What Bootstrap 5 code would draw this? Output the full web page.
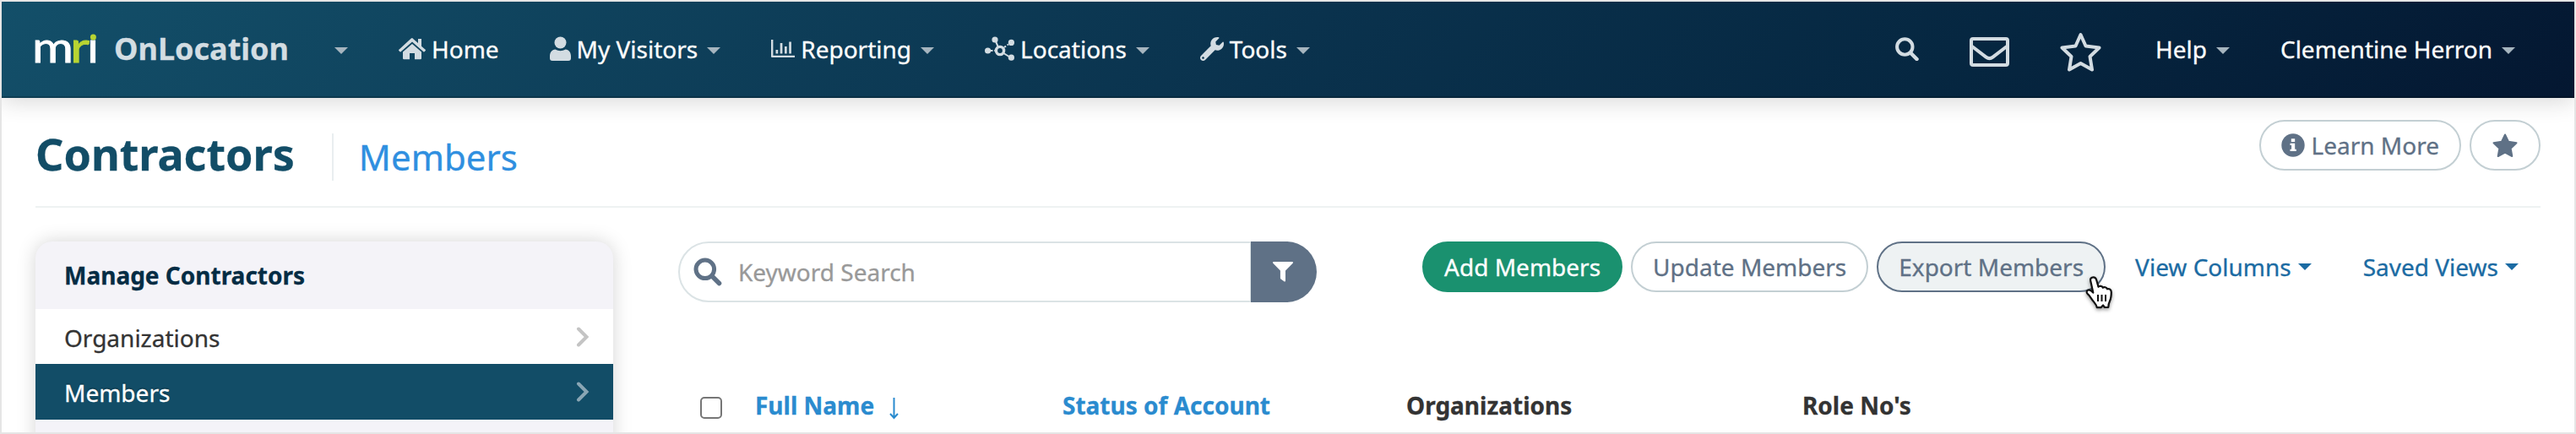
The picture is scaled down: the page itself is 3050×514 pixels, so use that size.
<!DOCTYPE html>
<html lang="en">
<head>
<meta charset="utf-8">
<title>Contractors – Members</title>
<link href="https://cdn.jsdelivr.net/npm/bootstrap@5.3.0/dist/css/bootstrap.min.css" rel="stylesheet">
<style>
html, body { height: 514px; overflow: hidden; }
body { font-family: "Noto Sans", sans-serif; font-size: 28px; line-height: 38px; color: #333; background: #fff; white-space: nowrap; -webkit-text-stroke: .3px; }
svg { display: block; flex: none; }
.frame { height: 514px; border: 2px solid #e5e5e5; overflow: hidden; }
.topnav { height: 114px; padding: 0 70px 0 40px; border-bottom: 2px solid #0003; background: linear-gradient(135deg, #134f69 0%, #0a324d 50%, #062741 75%, #041731 100%); box-shadow: 0 4px 26px rgba(0,0,0,.16); color: #fff; }
.topnav a { color: #fff; text-decoration: none; display: flex; align-items: center; gap: 7px; }
.nav-set { gap: 60px; }
.ico { fill: #d3dce2; color: #d3dce2; }
.tri { width: 0; height: 0; border: 8px solid transparent; border-top-color: #a6b5bf; border-bottom: 0; margin-left: 4px; }
.topnav .tri { margin-top: 4px; }
.wordmark { margin: 0 -6px; }
.product { font-size: 36px; font-weight: 700; color: #d3dde2; margin: 0 54px 0 21px; }
.page-head { height: 130px; margin: 0 40px; border-bottom: 2px solid #eef2f2; }
.page-head h1 { font-size: 52px; line-height: 56px; font-weight: 700; color: #124d67; margin: -4px 0 0; }
.crumb { font-size: 42px; line-height: 56px; height: 56px; border-left: 2px solid #e9eef0; margin: 0 0 0 44px; padding-left: 30px; color: #2f8fe0; }
.pill { height: 60px; border: 2px solid #c3cfd3; border-radius: 30px; padding: 0 24px; font-size: 28px; line-height: 38px; color: #5f7186; background: #fff; display: flex; align-items: center; gap: 8px; }
.pill-add { background: #1a916f; border-color: #1a916f; color: #fff; }
.pill-hot { background: #eef2f3; border-color: #5f7186; position: relative; }
.pill-link { border-color: transparent; color: #1b6ba3; background: none; margin-left: -1px; }
.pill-link .tri { border-top-color: #1b6ba3; margin: 0 0 1px 0; }
.pill-star { width: 84px; }
.pointer { position: absolute; left: 244px; top: 38px; z-index: 2; filter: drop-shadow(0 2px 2px rgba(0,0,0,.4)); }
.side { width: 684px; height: 300px; border-radius: 20px; background: #f4f3f8; box-shadow: 0 0 22px rgba(0,0,0,.17); overflow: hidden; flex: none; }
.side-title { height: 80px; padding: 0 34px; font-weight: 700; color: #042c44; display: flex; align-items: center; }
.side-item { height: 66px; padding: 1px 28px 0 34px; border: 0; border-radius: 0 !important; display: flex; align-items: center; justify-content: space-between; color: #333; background: #fff; }
.side-item.active { background: #124d67; color: #fff; text-shadow: 0 -2px 1px rgba(0,0,0,.2); }
.side-item svg { color: #c4c4c4; margin-top: -1px; }
.side-item.active svg { color: #8aa6b4; }
.finder { width: 756px; height: 72px; flex-wrap: nowrap; }
.finder-field { flex: 1; border: 2px solid #dbe3e5; border-radius: 36px 0 0 36px; display: flex; align-items: center; padding-left: 16px; background: #fff; }
.finder input { border: 0; padding: 0; margin-left: 19px; font-size: 28px; line-height: 38px; box-shadow: none !important; }
.finder input::placeholder { color: #999; opacity: 1; }
.finder-btn { width: 78px; border: 0; background: #5f7186; border-radius: 0 36px 36px 0; display: flex; align-items: center; padding: 0 0 0 26px; }
.grid-head { table-layout: fixed; margin: 94px 0 0; }
.grid-head th { padding: 0; height: 56px; vertical-align: middle; border: 0; font-weight: 700; line-height: 38px; color: #333; background: none; }
.grid-head th.sortable { color: #2a8bcf; }
.c-check { width: 91px; } .c-name { width: 364px; } .c-status { width: 407px; } .c-org { width: 469px; }
.grid-head .form-check-input { width: 26px; height: 26px; border: 2px solid #767676; border-radius: 5px; margin: 6px 0 0 26px; display: block; float: none; }
.head-left { padding-top: 42px; }
.head-right { padding-top: 26px; gap: 10px; }
.page-body { padding: 40px 40px 0; }
.page-body main { padding-left: 77px; }
.tools { gap: 10px; }
</style>
</head>
<body>
<div class="frame">
  <nav class="topnav d-flex align-items-center justify-content-between">
    <div class="d-flex align-items-center">
      <!-- mri wordmark -->
      <svg class="wordmark" width="84" height="80" viewBox="-6 -20 84 80" role="img" aria-label="mri" font-family="Lato, sans-serif" font-size="51" font-weight="400">
        <text x="-4" y="36" fill="#fff" stroke="#fff" stroke-width=".8" textLength="49" lengthAdjust="spacingAndGlyphs">m</text>
        <text x="41" y="36" fill="#b8d432" stroke="#b8d432" stroke-width=".8" textLength="23" lengthAdjust="spacingAndGlyphs">r</text>
        <text x="61" y="36" fill="#fff" stroke="#fff" stroke-width=".8" textLength="14" lengthAdjust="spacingAndGlyphs">ı</text>
        <circle cx="68.400" cy="6" r="3.500" fill="#b8d432"/>
      </svg>
      <span class="product">OnLocation</span>
      <div class="nav-set d-flex align-items-center">
        <a href="#"><i class="tri ms-0"></i></a>
        <a href="#"><svg class="ico" width="32" height="26" viewBox="0 0 32 26"><path d="M16 0 23 6V1h4v8.700l4.600 4a1 1 0 0 1 .1 1.400l-.9 1a1 1 0 0 1-1.400.1L16 4.600 2.600 16.200a1 1 0 0 1-1.400-.1l-.9-1a1 1 0 0 1 .1-1.400L14.500.7a2.300 2.300 0 0 1 3 0z"/><path d="M16 7 27 16.500V24a1.200 1.200 0 0 1-1.200 1.200H19V18h-6v7.200H6.200A1.200 1.200 0 0 1 5 24v-7.500z"/></svg>Home</a>
        <a href="#"><svg class="ico" width="25" height="30" viewBox="0 0 25 30"><circle cx="12.500" cy="7.500" r="7"/><path d="M6.500 15.500c2 1.300 4 1.700 6 1.700s4-.4 6-1.700c4 .3 6.500 3.500 6.500 8V26a3 3 0 0 1-3 3H3a3 3 0 0 1-3-3v-2.500c0-4.500 2.500-7.700 6.500-8z"/></svg>My Visitors<i class="tri"></i></a>
        <a href="#"><svg class="ico" width="28" height="22" viewBox="0 0 28 22"><path d="M0 0h2.400v18.800H28V21H1a1 1 0 0 1-1-1zM5.500 12h2.700v4.500H5.500zM10.700 4h2.700v12.500h-2.700zM16 8h2.700v8.500H16zM21.200 2.500h2.700v14h-2.700z"/></svg>Reporting<i class="tri"></i></a>
        <a href="#"><svg class="ico" width="35" height="30" viewBox="0 0 35 30"><g stroke="currentColor" fill="none" stroke-width="2"><path d="M12.500 5 16 13M21.500 19.500l8 5"/><path d="M7 17h5M23 13l5-3.500" stroke-dasharray="2.500 1.800"/><circle cx="18" cy="17" r="4.600" stroke-width="3.400"/></g><circle cx="12" cy="4" r="3.600"/><circle cx="31.400" cy="7.400" r="3.600"/><circle cx="3.600" cy="17" r="3.600"/><circle cx="31.400" cy="25.200" r="3.600"/></svg>Locations<i class="tri"></i></a>
        <a href="#"><svg class="ico" width="28" height="30" viewBox="0 0 512 548"><g transform="translate(0 18)"><path d="M507.700 109.100c-2.200-9-13.500-12.100-20.100-5.500l-74.400 74.400-67.900-11.300L334 98.900l74.400-74.400c6.600-6.600 3.400-17.900-5.700-20.200-47.400-11.700-99.600.9-136.600 37.900-39.600 39.600-50.500 97.100-34.100 147.200L18.700 402.800c-25 25-25 65.500 0 90.500s65.500 25 90.500 0l213.200-213.200c50.100 16.700 107.500 5.700 147.400-34.200 37.100-37.100 49.700-89.300 37.900-136.800zM64 472c-13.200 0-24-10.800-24-24 0-13.300 10.700-24 24-24s24 10.700 24 24c0 13.200-10.700 24-24 24z"/></g></svg>Tools<i class="tri"></i></a>
      </div>
    </div>
    <div class="nav-set d-flex align-items-center">
      <a href="#"><svg class="ico" width="28" height="28" viewBox="0 0 28 28"><g fill="none" stroke="currentColor"><circle cx="11.300" cy="11.500" r="9.200" stroke-width="4"/><path d="M18.500 19 25.500 26" stroke-width="4.500" stroke-linecap="round"/></g></svg></a>
      <a href="#"><svg class="ico mt-2" width="47" height="36" viewBox="0 0 47 36"><g fill="none" stroke="currentColor" stroke-width="4" stroke-linejoin="round"><rect x="2" y="2" width="43" height="31" rx="2"/><path d="M3 11l16.500 12.600q4 3 8 0L44 11"/></g></svg></a>
      <a href="#"><svg class="ico mt-2" width="49" height="48" viewBox="0 0 49 48"><path d="M24.500 3 30.500 16.500 46.500 18.500 35.500 29 38 44.500 24.500 37 11 44.500 13.500 29 2.500 18.500 18.500 16.500z" fill="none" stroke="currentColor" stroke-width="4" stroke-linejoin="round"/></svg></a>
      <a href="#" class="ps-1">Help<i class="tri"></i></a>
      <a href="#">Clementine Herron<i class="tri"></i></a>
    </div>
  </nav>

  <header class="page-head d-flex justify-content-between">
    <div class="head-left d-flex">
      <h1>Contractors</h1>
      <div class="crumb">Members</div>
    </div>
    <div class="head-right d-flex">
      <button class="pill"><svg width="28" height="28" viewBox="0 0 28 28"><circle cx="14" cy="14" r="13.700" fill="#5f7186"/><path fill="#fff" d="M11.800 6.200h4.400v3.700h-4.400zM10.500 11.700h5.700v7h1.600V21h-7.300v-2.300h1.600V14h-1.600z"/></svg>Learn More</button>
      <button class="pill pill-star justify-content-center"><svg width="30" height="29" viewBox="0 0 30 29"><path fill="#5f7186" stroke="#5f7186" stroke-width="2" stroke-linejoin="round" d="M15 1.500 19 9.800 28.500 11.200 21.700 17.800 23.300 27 15 22.600 6.700 27 8.300 17.800 1.500 11.200 11 9.800z"/></svg></button>
    </div>
  </header>

  <div class="page-body d-flex">
    <aside class="side">
      <div class="side-title">Manage Contractors</div>
      <div class="list-group list-group-flush">
        <a class="list-group-item side-item" href="#">Organizations<svg width="16" height="24" viewBox="0 0 16 24"><path d="M3 2.500 12.500 12 3 21.500" fill="none" stroke="currentColor" stroke-width="4" stroke-linecap="round"/></svg></a>
        <a class="list-group-item side-item active" href="#">Members<svg width="16" height="24" viewBox="0 0 16 24"><path d="M3 2.500 12.500 12 3 21.500" fill="none" stroke="currentColor" stroke-width="4" stroke-linecap="round"/></svg></a>
      </div>
    </aside>
    <main class="flex-grow-1">
      <div class="d-flex justify-content-between align-items-start">
        <div class="input-group finder">
          <div class="finder-field">
            <svg width="34" height="34" viewBox="0 0 34 34"><g fill="none" stroke="#5f7186"><circle cx="13.800" cy="13.800" r="10.800" stroke-width="5"/><path d="M22 22 30.500 30.500" stroke-width="5.500" stroke-linecap="round"/></g></svg>
            <input class="form-control" type="text" placeholder="Keyword Search">
          </div>
          <button class="finder-btn"><svg width="24" height="24" viewBox="0 0 24 24"><path fill="#fff" d="M1 0h22c1 0 1.300 1 .7 1.700L15 10.500V22.500c0 1-1 1.200-1.600.8L9.500 20.500a1.500 1.500 0 0 1-.6-1.200V10.500L.3 1.700C-.3 1 0 0 1 0z"/></svg></button>
        </div>
        <div class="tools d-flex">
          <button class="pill pill-add">Add Members</button>
          <button class="pill">Update Members</button>
          <button class="pill pill-hot">Export Members
            <svg class="pointer" width="36" height="42" viewBox="0 0 36 42"><path d="M10.500 2.300c2 0 3.200 1.400 3.700 3.200l2.300 8.300c.7-1.300 4.600-1.400 5.300 1 1.200-1.200 4.600-.8 5.200 1.500 2.200-.8 4.800.6 4.800 3.700 0 5-.4 7.600-1.800 10.500-1 2-1.700 3.300-1.700 7.300l-4.300.2-2-2.500-2.500 2.700h-4.700c-.5-3.500-3-5.700-5-8.400-2-2.600-3.500-5.600-6-7.600-2-1.700-1.300-4.800 1.500-4.800 2 0 3.300 1.200 5 3.200L7.200 6.500C6.600 4.200 8 2.300 10.500 2.300z" fill="#fff" stroke="#111" stroke-width="2.200" stroke-linejoin="round"/><path d="M16 23v8M20.500 23v8M25 23v8" stroke="#111" stroke-width="2"/></svg>
          </button>
          <button class="pill pill-link">View Columns<i class="tri"></i></button>
          <button class="pill pill-link">Saved Views<i class="tri"></i></button>
        </div>
      </div>
      <table class="table grid-head">
        <colgroup><col class="c-check"><col class="c-name"><col class="c-status"><col class="c-org"><col></colgroup>
        <thead><tr>
          <th><input class="form-check-input" type="checkbox" aria-label="Select all"></th>
          <th class="sortable"><div class="d-flex align-items-center" style="gap:18px">Full Name<svg class="mt-2" width="11" height="26" viewBox="0 0 11 26"><path d="M5.500 0v24M1 19l4.500 5L10 19" fill="none" stroke="#2a8bcf" stroke-width="2"/></svg></div></th>
          <th class="sortable">Status of Account</th>
          <th>Organizations</th>
          <th>Role No's</th>
        </tr></thead>
      </table>
    </main>
  </div>
</div>
<script src="https://cdn.jsdelivr.net/npm/bootstrap@5.3.0/dist/js/bootstrap.bundle.min.js"></script>
</body>
</html>
